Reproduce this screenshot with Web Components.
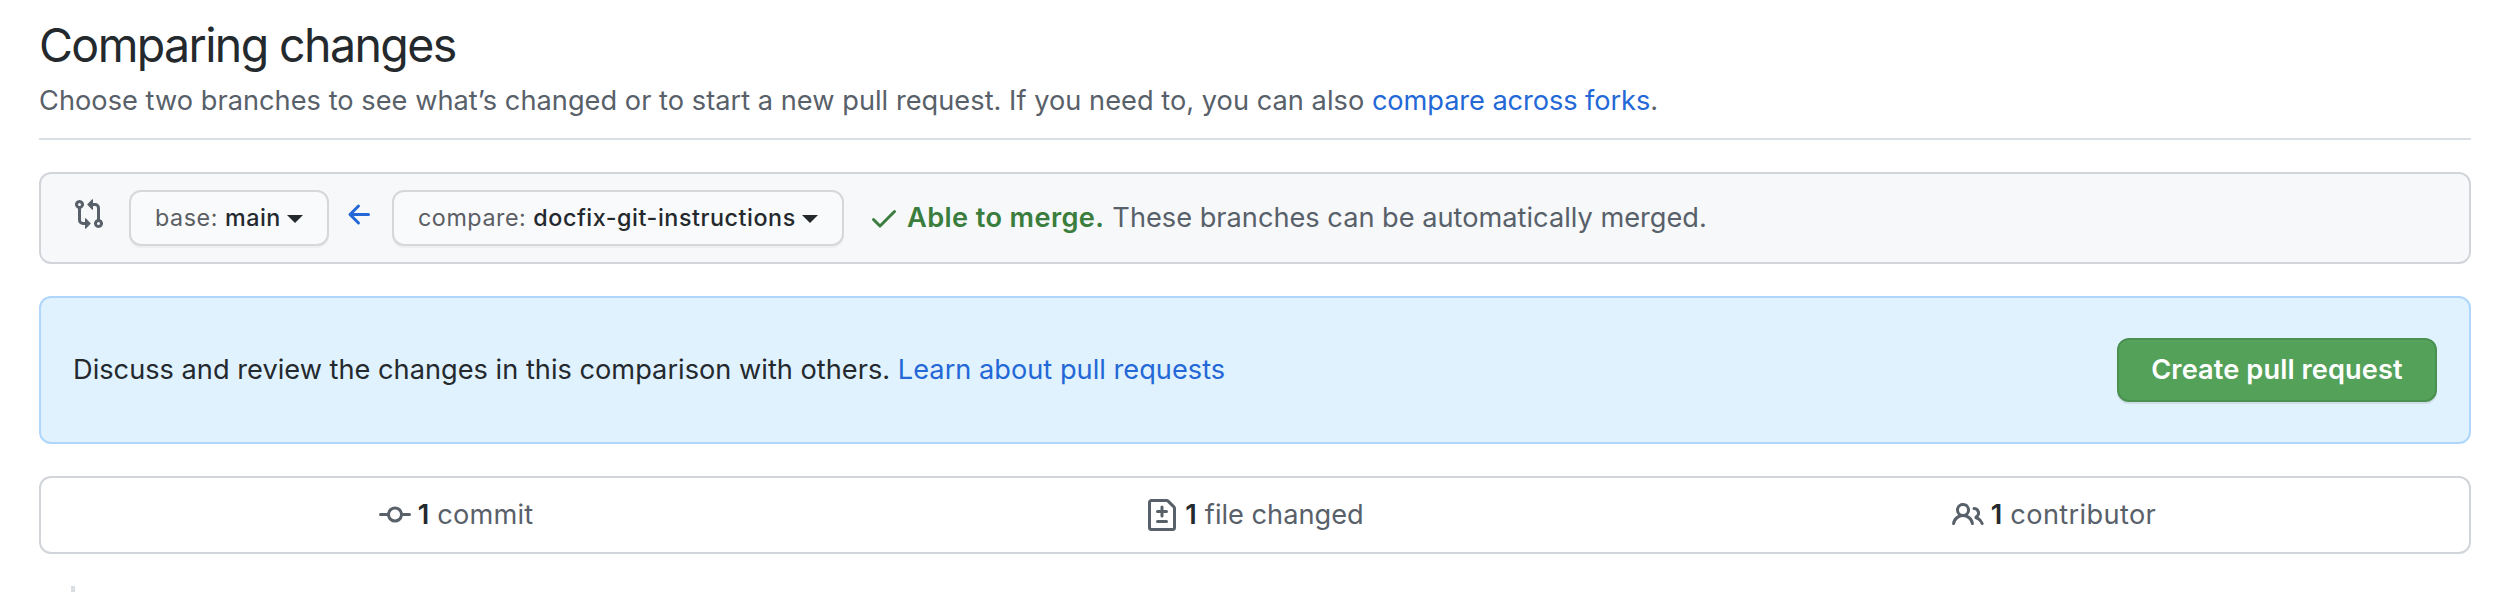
<!DOCTYPE html>
<html lang="en">
<head>
<meta charset="utf-8">
<title>Comparing changes</title>
<style>
body { margin: 0; background: #fff; color: #24292e; font-family: Inter, "Liberation Sans", sans-serif; font-size: 27.2px; line-height: 42px; }
</style>
</head>
<body>
<compare-page></compare-page>
<script>
const ICONS = {
  compare: "M9.573.677L7.177 3.073a.25.25 0 000 .354l2.396 2.396A.25.25 0 0010 5.646V4h1a1 1 0 011 1v5.628a2.251 2.251 0 101.5 0V5A2.5 2.5 0 0011 2.5h-1V.854a.25.25 0 00-.427-.177zM6 12v-1.646a.25.25 0 01.427-.177l2.396 2.396a.25.25 0 010 .354l-2.396 2.396A.25.25 0 016 15.146V13.5H5A2.5 2.5 0 012.5 11V5.372a2.25 2.25 0 111.5 0V11a1 1 0 001 1h1zm6.75 0a.75.75 0 100 1.5.75.75 0 000-1.5zM4 3.25a.75.75 0 11-1.5 0 .75.75 0 011.5 0z",
  arrow: "M7.78 12.53a.75.75 0 01-1.06 0L2.47 8.28a.75.75 0 010-1.06l4.25-4.25a.75.75 0 011.06 1.06L4.81 7h7.44a.75.75 0 010 1.5H4.81l2.97 2.97a.75.75 0 010 1.06z",
  check: "M13.78 4.22a.75.75 0 010 1.06l-7.25 7.25a.75.75 0 01-1.06 0L2.22 9.28a.75.75 0 011.06-1.06L6 10.94l6.72-6.72a.75.75 0 011.06 0z",
  commit: "M10.5 7.75a2.5 2.5 0 11-5 0 2.5 2.5 0 015 0zm1.43.75a4.002 4.002 0 01-7.86 0H.75a.75.75 0 110-1.5h3.32a4.001 4.001 0 017.86 0h3.32a.75.75 0 110 1.5h-3.32z",
  diff: "M2.75 1.5a.25.25 0 00-.25.25v12.5c0 .138.112.25.25.25h10.5a.25.25 0 00.25-.25V4.664a.25.25 0 00-.073-.177l-2.914-2.914a.25.25 0 00-.177-.073H2.75zM1 1.75C1 .784 1.784 0 2.75 0h7.586c.464 0 .909.184 1.237.513l2.914 2.914c.329.328.513.773.513 1.237v9.586A1.75 1.75 0 0113.25 16H2.75A1.75 1.75 0 011 14.25V1.75zm7 1.5a.75.75 0 01.75.75v1.5h1.5a.75.75 0 010 1.5h-1.5v1.5a.75.75 0 01-1.5 0V7h-1.5a.75.75 0 010-1.5h1.5V4A.75.75 0 018 3.25zm-3 8a.75.75 0 01.75-.75h4.5a.75.75 0 010 1.5h-4.5a.75.75 0 01-.75-.75z",
  people: "M5.5 3.5a2 2 0 100 4 2 2 0 000-4zM2 5.5a3.5 3.5 0 115.898 2.549 5.507 5.507 0 013.034 4.084.75.75 0 11-1.482.235 4.001 4.001 0 00-7.9 0 .75.75 0 01-1.482-.236A5.507 5.507 0 013.102 8.05 3.49 3.49 0 012 5.5zM11 4a.75.75 0 100 1.5 1.5 1.5 0 01.666 2.844.75.75 0 00-.416.672v.352a.75.75 0 00.574.73c1.2.289 2.162 1.2 2.522 2.372a.75.75 0 101.434-.44 5.01 5.01 0 00-2.56-3.012A3 3 0 0011 4z"
};
const define = (name, html) => customElements.define(name, class extends HTMLElement {
  constructor() {
    super();
    this.attachShadow({ mode: "open" }).innerHTML = html;
  }
});

customElements.define("oct-icon", class extends HTMLElement {
  connectedCallback() {
    if (this.shadowRoot) return;
    this.attachShadow({ mode: "open" }).innerHTML = `
      <style>:host{display:block;flex:none;width:32px;height:32px} svg{display:block;fill:currentColor}</style>
      <svg width="32" height="32" viewBox="0 0 16 16"><path fill-rule="evenodd" d="${ICONS[this.getAttribute("name")]}"/></svg>`;
  }
});

define("text-link", `
  <style>:host{display:inline;color:#2368d6} a{color:inherit;text-decoration:none}</style>
  <a href="#"><slot></slot></a>`);

define("page-head", `
  <style>
    :host{display:block;box-sizing:border-box;height:140px;padding-top:14px;border-bottom:2px solid #d8dee4}
    h1{margin:0;font-size:46.5px;font-weight:400;line-height:62px;letter-spacing:-1.61px;font-optical-sizing:none}
    p{margin:4px 0 0;line-height:42px;color:#586069;letter-spacing:.03px;white-space:nowrap}
  </style>
  <h1><slot name="title"></slot></h1>
  <p><slot></slot></p>`);

define("branch-select", `
  <style>
    :host{display:block;flex:none}
    button{display:flex;align-items:center;box-sizing:border-box;width:100%;height:56px;margin:0;padding:0 0 0 24px;
      border:2px solid #d5d7da;border-radius:12px;background:#f9fafb;box-shadow:0 2px 0 rgba(27,31,35,.04);
      font:500 23.3px/40px Inter,"Liberation Sans",sans-serif;color:#24292e;letter-spacing:.55px;white-space:nowrap}
    .label{font-weight:400;color:#5b5e63;margin-right:7px}
    .caret{border:8px solid transparent;border-top-color:#24292e;border-bottom:0;margin:2px 0 0 6px}
  </style>
  <button type="button"><span class="label"><slot name="label"></slot></span><slot></slot><span class="caret"></span></button>`);

define("range-editor", `
  <style>
    :host{display:flex;box-sizing:border-box;height:92px;margin-top:32px;padding:16px 0 0 32px;border:2px solid #d1d5da;border-radius:12px;background:#f6f8fa;color:#586069;white-space:nowrap}
    .range{margin-top:8px}
    .base{width:200px;margin-left:24px}
    .arrow{margin:9px 16px 0 15px;color:#2368d6}
    .head{width:452px}
    .state{display:flex;height:42px;margin-top:7px;margin-left:24px}
    .check{margin-top:5px;color:#3a7d3c}
    b{font-weight:600;color:#3a7d3c;letter-spacing:.38px;margin:0 8px 0 7px}
  </style>
  <oct-icon class="range" name="compare"></oct-icon>
  <branch-select class="base"><span slot="label">base:</span>main</branch-select>
  <oct-icon class="arrow" name="arrow"></oct-icon>
  <branch-select class="head"><span slot="label">compare:</span>docfix-git-instructions</branch-select>
  <div class="state"><oct-icon class="check" name="check"></oct-icon><b>Able to merge.</b><span>These branches can be automatically merged.</span></div>`);

define("green-button", `
  <style>
    :host{display:block}
    button{display:block;box-sizing:border-box;width:320px;height:64px;margin:0;padding:0;border:2px solid #4a9150;border-radius:12px;
      background:#54a15a;box-shadow:0 2px 0 rgba(27,31,35,.1),inset 0 2px 0 rgba(255,255,255,.03);
      color:#fff;font:600 27.2px/60px Inter,"Liberation Sans",sans-serif;letter-spacing:.1px}
  </style>
  <button type="button"><slot></slot></button>`);

define("discuss-banner", `
  <style>
    :host{display:flex;align-items:center;justify-content:space-between;box-sizing:border-box;height:148px;margin-top:32px;padding:0 32px;
      border:2px solid #b0d7fb;border-radius:12px;background:#e0f2fe;letter-spacing:.01px;white-space:nowrap}
  </style>
  <div>Discuss and review the changes in this comparison with others. <text-link>Learn about pull requests</text-link></div>
  <green-button>Create pull request</green-button>`);

define("stat-item", `
  <style>
    :host{display:flex;justify-content:center;color:#586069}
    b{font-weight:600;color:#24292e;margin:0 8px 0 7px}
    .t{display:flex;height:42px;margin-top:16px}
  </style>
  <slot name="icon"></slot><div class="t"><b><slot name="count"></slot></b><slot></slot></div>`);

define("stats-bar", `
  <style>
    :host{display:grid;grid-template-columns:830fr 768fr 830fr;box-sizing:border-box;height:78px;margin-top:32px;border:2px solid #d1d5da;border-radius:12px}
    oct-icon{margin-top:21px}
  </style>
  <stat-item><oct-icon slot="icon" name="commit"></oct-icon><span slot="count">1</span><span style="letter-spacing:.2px">commit</span></stat-item>
  <stat-item><oct-icon slot="icon" name="diff"></oct-icon><span slot="count">1</span><span>file changed</span></stat-item>
  <stat-item><oct-icon slot="icon" name="people"></oct-icon><span slot="count">1</span><span style="letter-spacing:.35px">contributor</span></stat-item>`);

define("compare-page", `
  <style>
    :host{display:block;box-sizing:border-box;height:592px;overflow:hidden;padding:0 25px 0 39px}
    .timeline{width:4px;height:6px;margin:32px 0 0 32px;background:#d8dee4}
    .forks{letter-spacing:-.08px}
  </style>
  <page-head><span slot="title">Comparing changes</span>Choose two branches to see what’s changed or to start a new pull request. If you need to, you can also <text-link class="forks">compare across forks</text-link>.</page-head>
  <range-editor></range-editor>
  <discuss-banner></discuss-banner>
  <stats-bar></stats-bar>
  <div class="timeline"></div>`);
</script>
</body>
</html>
